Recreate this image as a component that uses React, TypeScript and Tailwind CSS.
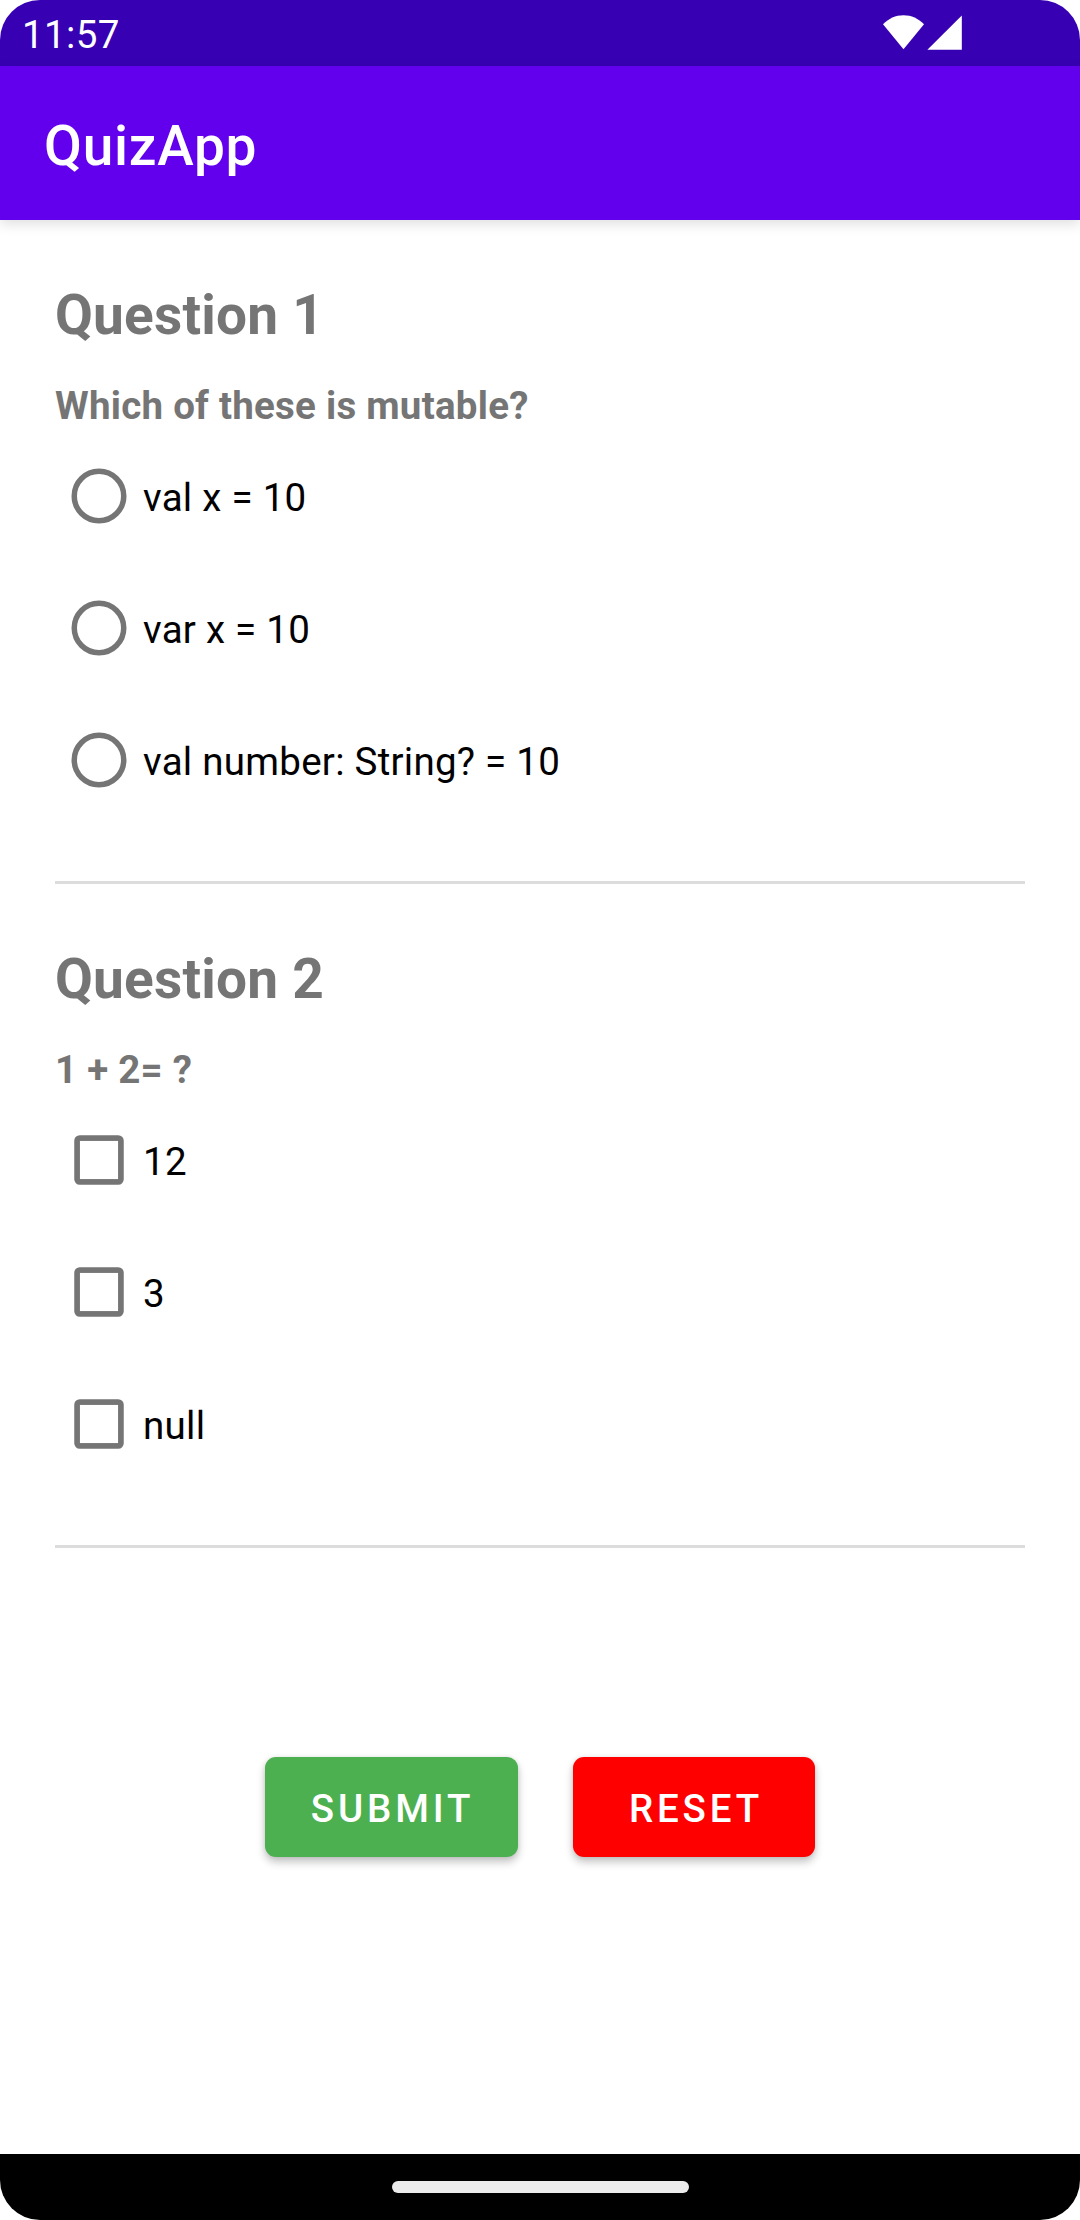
import React from "react";

type Kind = "radio" | "checkbox";

function StatusBar() {
  return (
    <div className="flex h-[66px] items-start justify-between bg-[#3700b3] pl-[22px] pr-[118px] text-white">
      <span className="pt-[12px] text-[38.5px] leading-[45px] tracking-[0.35px]">11:57</span>
      <svg className="mt-[14px] h-[37px] w-[80px]" viewBox="0 0 80 37" fill="currentColor">
        <path d="M21.5 35.3 L1 10.3 C6.6 4.4 13.5 1.2 21.5 1.2 C29.5 1.2 36.4 4.4 42 10.3 Z" />
        <path d="M45.4 35.8 L79.8 1.4 V35.8 Z" />
      </svg>
    </div>
  );
}

function Option({ kind, label }: { kind: Kind; label: string }) {
  return (
    <label className="flex h-[132px] items-center">
      <svg className="size-[88px] shrink-0" viewBox="0 0 88 88" fill="none" stroke="#757575" strokeWidth="5.5">
        {kind === "radio" ? (
          <circle cx="44" cy="44" r="24.75" />
        ) : (
          <>
            <rect x="22" y="22" width="44" height="44" rx="2.75" />
            <rect x="23" y="23" width="42" height="42" strokeWidth="3.5" />
          </>
        )}
      </svg>
      <span className="pt-[3px] text-[38.5px] leading-[45px] tracking-[0.26px] text-black">{label}</span>
    </label>
  );
}

function Question({ title, text, kind, options }: { title: string; text: string; kind: Kind; options: string[] }) {
  return (
    <section className="border-b-[3px] border-[#dcdcdc] py-[55px]">
      <h2 className="text-[55px] leading-[80px] font-bold tracking-[0.2px] text-[#757575]">{title}</h2>
      <p className="mt-[26px] text-[38.5px] leading-[49px] font-bold tracking-[0.25px] text-[#757575]">{text}</p>
      {options.map((o) => (
        <Option key={o} kind={kind} label={o} />
      ))}
    </section>
  );
}

export default function App() {
  return (
    <div className="h-[2220px] w-[1080px] bg-white">
      <div className="flex h-full flex-col overflow-hidden rounded-[40px] bg-white font-['Roboto',sans-serif]">
        <StatusBar />
        <header className="h-[154px] bg-[#6200ee] pl-[44px] pt-[48px] shadow-[0_4px_12px_rgba(0,0,0,0.13)]">
          <h1 className="text-[55px] leading-[64px] font-medium tracking-[0.75px] text-white">QuizApp</h1>
        </header>
        <main className="flex-1 px-[55px]">
          <Question
            title="Question 1"
            text="Which of these is mutable?"
            kind="radio"
            options={["val x = 10", "var x = 10", "val number: String? = 10"]}
          />
          <Question title="Question 2" text="1 + 2= ?" kind="checkbox" options={["12", "3", "null"]} />
          <div className="mt-[209px] flex justify-center gap-[55px] text-[38.5px] leading-[45px] font-medium tracking-[3.85px] text-white">
            <button className="h-[100px] w-[253px] rounded-[11px] bg-[#4caf50] pt-[3px] pl-[2px] shadow-[0_5px_8px_rgba(0,0,0,0.24),0_0_5px_rgba(0,0,0,0.08)]">
              SUBMIT
            </button>
            <button className="h-[100px] w-[242px] rounded-[11px] bg-[#ff0000] pt-[3px] pl-[4px] shadow-[0_5px_8px_rgba(0,0,0,0.24),0_0_5px_rgba(0,0,0,0.08)]">
              RESET
            </button>
          </div>
        </main>
        <footer className="flex h-[66px] justify-center bg-black pt-[27px]">
          <div className="h-[12px] w-[297px] rounded-full bg-[#ececec]" />
        </footer>
      </div>
    </div>
  );
}
